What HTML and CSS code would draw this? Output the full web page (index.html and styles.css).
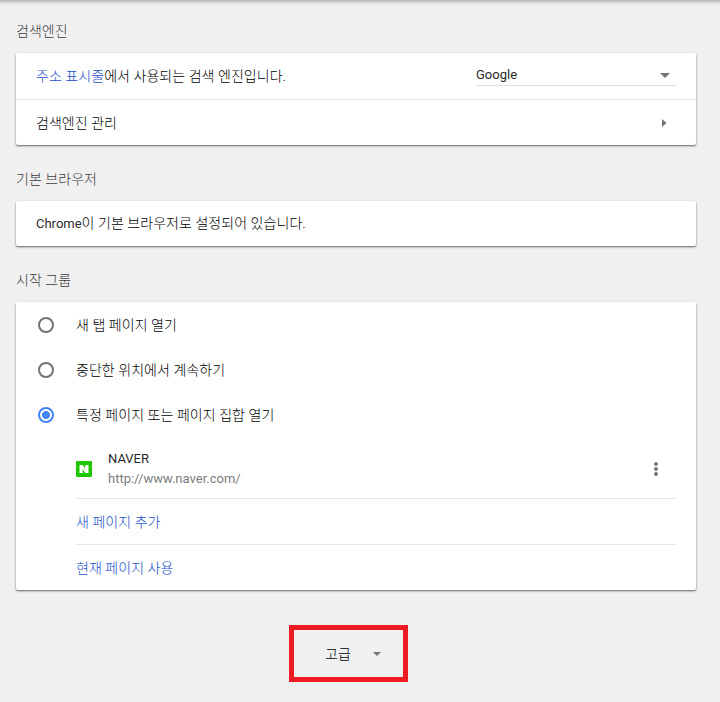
FILE: index.html
```html
<!DOCTYPE html>
<html lang="ko">
<head>
<meta charset="utf-8">
<title>설정</title>
<link rel="stylesheet" href="styles.css">
</head>
<body>
<main class="page">
  <section>
    <h2>검색엔진</h2>
    <div class="card">
      <div class="row">
        <span><a href="#">주소 표시줄</a>에서 사용되는 검색 엔진입니다.</span>
        <div class="select latin">Google
          <svg width="10" height="5" viewBox="0 0 10 5"><path d="M0 0h10L5 5z"/></svg>
        </div>
      </div>
      <div class="row divided">
        <span>검색엔진 관리</span>
        <svg class="chevron" width="5" height="8" viewBox="0 0 5 8"><path d="M0 0l4.500 4L0 8z"/></svg>
      </div>
    </div>
  </section>
  <section>
    <h2>기본 브라우저</h2>
    <div class="card">
      <div class="row single"><span><span class="latin">Chrome</span>이 기본 브라우저로 설정되어 있습니다.</span></div>
    </div>
  </section>
  <section>
    <h2>시작 그룹</h2>
    <div class="card">
      <div class="option"><i class="radio"></i><span>새 탭 페이지 열기</span></div>
      <div class="option"><i class="radio"></i><span>중단한 위치에서 계속하기</span></div>
      <div class="option"><i class="radio checked"></i><span>특정 페이지 또는 페이지 집합 열기</span></div>
      <div class="pages">
        <div class="site latin">
          <svg class="favicon" width="16" height="16" viewBox="0 0 16 16"><rect width="16" height="16" rx="1" fill="#1ec800"/><path d="M3.500 4h3.200l2.500 3.700V4h3.300v8H9.300L6.700 8.300V12H3.500z" fill="#fff"/></svg>
          <div class="info"><div>NAVER</div><div class="url">http://www.naver.com/</div></div>
          <svg class="more" width="4" height="14" viewBox="0 0 4 14"><circle cx="2" cy="2" r="1.900"/><circle cx="2" cy="7" r="1.900"/><circle cx="2" cy="12" r="1.900"/></svg>
        </div>
        <div class="action"><a href="#">새 페이지 추가</a></div>
        <div class="action"><a href="#">현재 페이지 사용</a></div>
      </div>
    </div>
  </section>
  <div class="advanced"><span>고급</span><svg width="8" height="4" viewBox="0 0 8 4"><path d="M0 0h8L4 4z"/></svg></div>
</main>
</body>
</html>
```
FILE: styles.css
```css
* { box-sizing: border-box; }
body {
  margin: 0;
  background: #f0f0f0;
  color: #000;
  font: 300 14px/20px Roboto, "Noto Sans CJK KR", sans-serif;
  letter-spacing: .05px;
}
.page {
  height: 702px;
  padding: 21px 24px 0 16px;
  background: linear-gradient(#b5b5b5, #d0d0d0 2px, #e9e9e9 4px, #f0f0f0 6px) no-repeat 0 0 / 100% 6px;
}
h2 {
  height: 32px;
  margin: 0;
  color: #3c3c3c;
  font-size: 14px;
  font-weight: 300;
  line-height: 20px;
}
section {
  margin-top: -1px;
  margin-bottom: 24px;
  padding-top: 1px;
}
section:nth-child(3) { margin-bottom: 35px; }
.card {
  width: 680px;
  background: #fff;
  border-radius: 2px;
  box-shadow: 0 1px 2px rgba(0, 0, 0, .5), 0 1px 2px rgba(0, 0, 0, .12);
}
a { color: #1a4fcb; text-decoration: none; }
svg { flex: none; fill: #737373; }
.latin {
  color: #2a2a2a;
  font-size: 13px;
  font-weight: 400;
  letter-spacing: 0;
}
.row {
  display: flex;
  align-items: center;
  justify-content: space-between;
  height: 46px;
  padding: 0 20px;
}
.single { height: 45px; }
.divided { border-top: 1px solid #e8e8e8; }
.select {
  display: flex;
  align-items: center;
  justify-content: space-between;
  width: 200px;
  height: 22px;
  margin-bottom: 2px;
  padding-right: 6px;
  border-bottom: 1px solid #dedede;
}
.select svg { margin-top: 2px; }
.chevron { margin-right: 9px; }
.option {
  display: flex;
  align-items: center;
  height: 45px;
  padding-left: 22px;
}
.radio {
  width: 16px;
  height: 16px;
  margin-right: 22px;
  border: 2px solid #737373;
  border-radius: 50%;
}
.checked {
  border-color: #4285f4;
  background: radial-gradient(circle, #4285f4 3.700px, transparent 4.300px);
}
.pages { margin: 0 20px 0 60px; }
.site {
  display: flex;
  align-items: center;
  height: 61px;
  padding-top: 2px;
}
.info { flex: 1; margin-left: 16px; }
.url { color: #7c7c7c; }
.more { margin-right: 18px; }
.action {
  height: 46px;
  padding-top: 13px;
  border-top: 1px solid #e8e8e8;
}
.advanced {
  display: flex;
  align-items: center;
  width: 119px;
  height: 57px;
  margin-left: 273px;
  padding-left: 31px;
  border: 5px solid #ed1c24;
}
.advanced svg { margin-left: 22px; }
```
